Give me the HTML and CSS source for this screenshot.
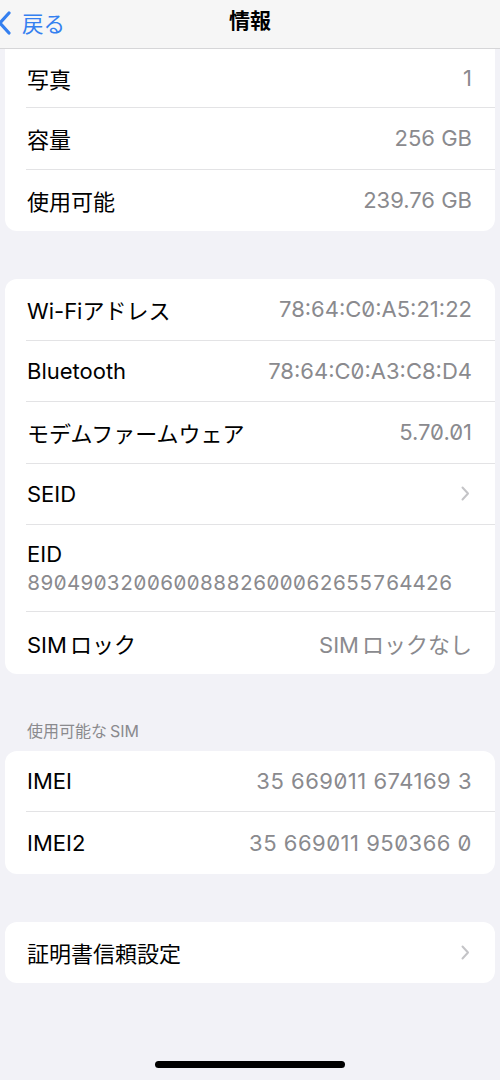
FILE: index.html
```html
<!DOCTYPE html>
<html lang="ja">
<head>
    <meta charset="UTF-8">
    <meta name="viewport" content="width=device-width, initial-scale=1.0">
    <title>情報</title>
    <link rel="stylesheet" href="styles.css">
</head>
<body>
    <!-- ナビゲーションバー -->
    <header class="nav">
        <a class="nav-back" href="javascript:;">
            <svg class="nav-chevron" width="13" height="24" viewBox="0 0 13 24">
                <path d="M11 2 L2 12 L11 22" fill="none" stroke="currentColor" stroke-width="3.2" stroke-linecap="round" stroke-linejoin="round"/>
            </svg>
            <span>戻る</span>
        </a>
        <h1 class="nav-title">情報</h1>
    </header>

    <main class="content">
        <!-- ストレージ -->
        <section class="group group-top">
            <div class="row row-first">
                <span class="label">写真</span>
                <span class="value">1</span>
            </div>
            <div class="row">
                <span class="label">容量</span>
                <span class="value">256 GB</span>
            </div>
            <div class="row">
                <span class="label">使用可能</span>
                <span class="value">239.76 GB</span>
            </div>
        </section>

        <!-- ネットワーク -->
        <section class="group">
            <div class="row">
                <span class="label">Wi-Fiアドレス</span>
                <span class="value">78:64:C0:A5:21:22</span>
            </div>
            <div class="row">
                <span class="label">Bluetooth</span>
                <span class="value">78:64:C0:A3:C8:D4</span>
            </div>
            <div class="row">
                <span class="label">モデムファームウェア</span>
                <span class="value">5.70.01</span>
            </div>
            <div class="row">
                <span class="label">SEID</span>
                <svg class="chevron" width="9" height="15" viewBox="0 0 9 15">
                    <path d="M1.5 1.5 L7 7.5 L1.5 13.5" fill="none" stroke="currentColor" stroke-width="2" stroke-linecap="round" stroke-linejoin="round"/>
                </svg>
            </div>
            <div class="row row-stack">
                <span class="label">EID</span>
                <span class="value value-mono">89049032006008882600062655764426</span>
            </div>
            <div class="row">
                <span class="label">SIM<span class="gap"></span>ロック</span>
                <span class="value">SIM<span class="gap"></span>ロックなし</span>
            </div>
        </section>

        <!-- SIM -->
        <h2 class="group-title">使用可能な<span class="gap"></span>SIM</h2>
        <section class="group">
            <div class="row">
                <span class="label">IMEI</span>
                <span class="value value-imei">35 669011 674169 3</span>
            </div>
            <div class="row">
                <span class="label">IMEI2</span>
                <span class="value value-imei">35 669011 950366 0</span>
            </div>
        </section>

        <section class="group">
            <div class="row">
                <span class="label">証明書信頼設定</span>
                <svg class="chevron" width="9" height="15" viewBox="0 0 9 15">
                    <path d="M1.5 1.5 L7 7.5 L1.5 13.5" fill="none" stroke="currentColor" stroke-width="2" stroke-linecap="round" stroke-linejoin="round"/>
                </svg>
            </div>
        </section>
    </main>

    <div class="home-bar"></div>
</body>
</html>
```

FILE: styles.css
```css
* {
    margin: 0;
    padding: 0;
    box-sizing: border-box;
}
body {
    width: 500px;
    height: 1080px;
    background: #f2f2f7;
    font-family: Inter, "Noto Sans CJK JP", sans-serif;
    color: #000;
    position: relative;
    overflow: hidden;
}

/* ナビゲーション */
.nav {
    height: 49px;
    background: #f6f6f6;
    border-bottom: 1px solid #d6d6d8;
    display: flex;
    align-items: center;
    justify-content: center;
    position: relative;
}
.nav-back {
    position: absolute;
    left: 0;
    top: 7px;
    display: flex;
    align-items: center;
    gap: 11px;
    color: #3580f0;
    text-decoration: none;
    font-size: 21.5px;
}
.nav-chevron {
    margin-left: -2px;
}
.nav-title {
    font-size: 21px;
    font-weight: 700;
    margin-top: -10px;
}

/* グループ */
.content {
    padding: 0 5px;
}
.group {
    background: #fff;
    border-radius: 12px;
    margin-bottom: 48px;
}
.group-top {
    border-radius: 0 0 12px 12px;
}
.group-title {
    font-size: 16px;
    line-height: 22px;
    font-weight: 400;
    color: #8a8a8e;
    padding: 0 22px;
    margin-top: -2px;
    margin-bottom: 9px;
}
.gap {
    display: inline-block;
    width: 3px;
}
.row {
    height: 61.5px;
    margin-left: 21px;
    padding-right: 23px;
    padding-left: 1px;
    display: flex;
    align-items: center;
    justify-content: space-between;
    border-bottom: 1px solid #e3e3e5;
    font-size: 22px;
}
.row:last-child {
    border-bottom: none;
}
.row-first {
    height: 59px;
}
.row-stack {
    height: 87px;
    flex-direction: column;
    align-items: flex-start;
    justify-content: center;
    gap: 3px;
}
.value {
    color: #8a8a8e;
    font-feature-settings: "zero";
}
.value-mono {
    font-size: 20.5px;
    font-variant-numeric: tabular-nums;
    font-feature-settings: "tnum", "zero";
}
.value-imei {
    letter-spacing: 0.5px;
}
.chevron {
    color: #c4c4c7;
    margin-right: 2px;
}

.home-bar {
    position: absolute;
    left: 155px;
    top: 1061px;
    width: 190px;
    height: 7px;
    border-radius: 4px;
    background: #000;
}
```
